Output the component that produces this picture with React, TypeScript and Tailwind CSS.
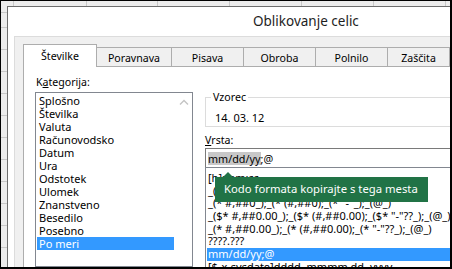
import React from "react"

const categories = [
  "Splošno",
  "Številka",
  "Valuta",
  "Računovodsko",
  "Datum",
  "Ura",
  "Odstotek",
  "Ulomek",
  "Znanstveno",
  "Besedilo",
  "Posebno",
  "Po meri",
]

const formats = [
  "[h]:mm:ss",
  '_($* #,##0_);_($* (#,##0);_($* "-"_);_(@_)',
  '_(* #,##0_);_(* (#,##0);_(* "-"_);_(@_)',
  '_($* #,##0.00_);_($* (#,##0.00);_($* "-"??_);_(@_)',
  '_(* #,##0.00_);_(* (#,##0.00);_(* "-"??_);_(@_)',
  "????.???",
  "mm/dd/yy;@",
  "[$-x-sysdate]dddd, mmmm dd, yyyy",
]

const tabs = [
  { label: "Številke", w: "w-[74px]", active: true },
  { label: "Poravnava", w: "w-[76px]" },
  { label: "Pisava", w: "w-[73px]" },
  { label: "Obroba", w: "w-[73px]" },
  { label: "Polnilo", w: "w-[73px]" },
  { label: "Zaščita", w: "w-[63px]" },
]

const cols = ["w-[13px]", "w-[73px]", "w-[71px]", "w-[72px]", "w-[72px]", "w-[72px]", "w-[72px]", "w-[72px]"]
const rows = ["h-[7px]", "h-[15px]", "h-[22px]", "h-[22px]", "h-[22px]", "h-[22px]", "h-[22px]", "h-[22px]", "h-[22px]", "h-[22px]", "h-[22px]", "h-[22px]"]

export default function App() {
  return (
    <div className="flex h-[269px] w-[452px] flex-col overflow-hidden border-t border-l border-r-2 border-b-2 border-black bg-[#ececec] font-['Noto_Sans',sans-serif] text-black">
      {/* sheet behind the dialog */}
      <div className="flex h-[5px] shrink-0">
        {cols.map((c, i) => (
          <div key={i} className={`${c} shrink-0 border-r border-[#c8c8c8]`} />
        ))}
      </div>
      <div className="flex min-h-0 flex-1">
        <div className="flex w-[6px] shrink-0 flex-col">
          {rows.map((r, i) => (
            <div key={i} className={`${r} shrink-0 border-b border-[#c8c8c8]`} />
          ))}
        </div>

        {/* dialog */}
        <div className="flex min-w-0 flex-1 flex-col border-t border-l border-[#6e6e6e] bg-white">
          <div className="flex h-[29px] shrink-0 items-center pl-[245px] text-[13.5px] text-[#1e1e1e]">
            Oblikovanje celic
          </div>
          <div className="ml-[6px] flex min-h-0 flex-1 flex-col border-t border-l border-[#dcdcdc] bg-[#f0f0f0]">
            <div className="flex items-end pl-[8px] pt-[7px] text-[10.6px]">
              {tabs.map((t, i) =>
                t.active ? (
                  <div
                    key={t.label}
                    className={`${t.w} relative z-10 -mb-px flex h-[23px] shrink-0 items-start justify-center border-t border-l border-r border-[#adadad] bg-white pt-[3px] leading-4`}
                  >
                    {t.label}
                  </div>
                ) : (
                  <div
                    key={t.label}
                    className={`${t.w} ${i > 0 ? "-ml-px" : ""} flex h-[19px] shrink-0 items-start justify-center border-t border-l border-r border-[#adadad] bg-[#f0f0f0] pt-[2px] leading-4`}
                  >
                    {t.label}
                  </div>
                )
              )}
            </div>

            <div className="ml-[8px] flex min-h-0 flex-1 gap-[12px] border-t border-l border-[#adadad] bg-white pl-[11px] text-[10.6px]">
              {/* Kategorija */}
              <div className="flex shrink-0 flex-col pt-[7px]">
                <div className="h-4 pl-px leading-4">
                  K<span className="underline">a</span>tegorija:
                </div>
                <div className="mt-[2px] flex w-[158px] flex-1 border border-[#828790] bg-white text-[11px]">
                  <div className="flex-1 px-px pt-px">
                    {categories.map((c) => (
                      <div
                        key={c}
                        className={`h-[13px] pl-[2px] leading-[13px] ${c === "Po meri" ? "bg-[#3399ff] text-white" : ""}`}
                      >
                        {c}
                      </div>
                    ))}
                  </div>
                  <div className="flex w-[17px] shrink-0 justify-center pt-[6px]">
                    <svg width="10" height="6" viewBox="0 0 10 6">
                      <path d="M1 5.5 L5 1.5 L9 5.5" fill="none" stroke="#c4c4c4" strokeWidth="1.4" />
                    </svg>
                  </div>
                </div>
              </div>

              {/* Vzorec / Vrsta */}
              <div className="relative flex min-w-0 flex-1 flex-col pt-[22px]">
                <fieldset className="h-[40px] border border-r-0 border-[#dcdcdc] p-0">
                  <legend className="ml-[5px] px-[2px] leading-4">Vzorec</legend>
                  <div className="mt-[5px] pl-[9px] text-[11px] leading-4">14. 03. 12</div>
                </fieldset>
                <div className="mt-[5px] h-4 leading-4">
                  <span className="underline">V</span>rsta:
                </div>
                <div className="flex h-[20px] shrink-0 items-center border border-r-0 border-[#7a7a7a] pl-[2px] text-[10.8px]">
                  <span className="bg-[#c8c8c8] leading-[13px]">mm/dd/yy</span>
                  <span className="leading-[13px]">;@</span>
                </div>
                <div className="-mt-px flex-1 border border-r-0 border-[#828790] pt-[4px] pl-px text-[11px]">
                  {formats.map((f) => (
                    <div
                      key={f}
                      className={`h-[12.67px] whitespace-nowrap pl-px leading-[12.67px] ${f === "mm/dd/yy;@" ? "bg-[#3399ff] text-white" : ""}`}
                    >
                      {f}
                    </div>
                  ))}
                </div>

                {/* tooltip */}
                <div className="absolute left-[10px] top-[110px] flex h-[25px] w-[213px] items-center whitespace-nowrap bg-[#217346] pl-[9px] text-[11.3px] text-white">
                  <div className="absolute -top-[5px] left-[8px] h-0 w-0 border-r-[5px] border-b-[5px] border-l-[5px] border-r-transparent border-b-[#217346] border-l-transparent" />
                  Kodo formata kopirajte s tega mesta
                </div>
              </div>
            </div>
          </div>
        </div>
      </div>
    </div>
  )
}
